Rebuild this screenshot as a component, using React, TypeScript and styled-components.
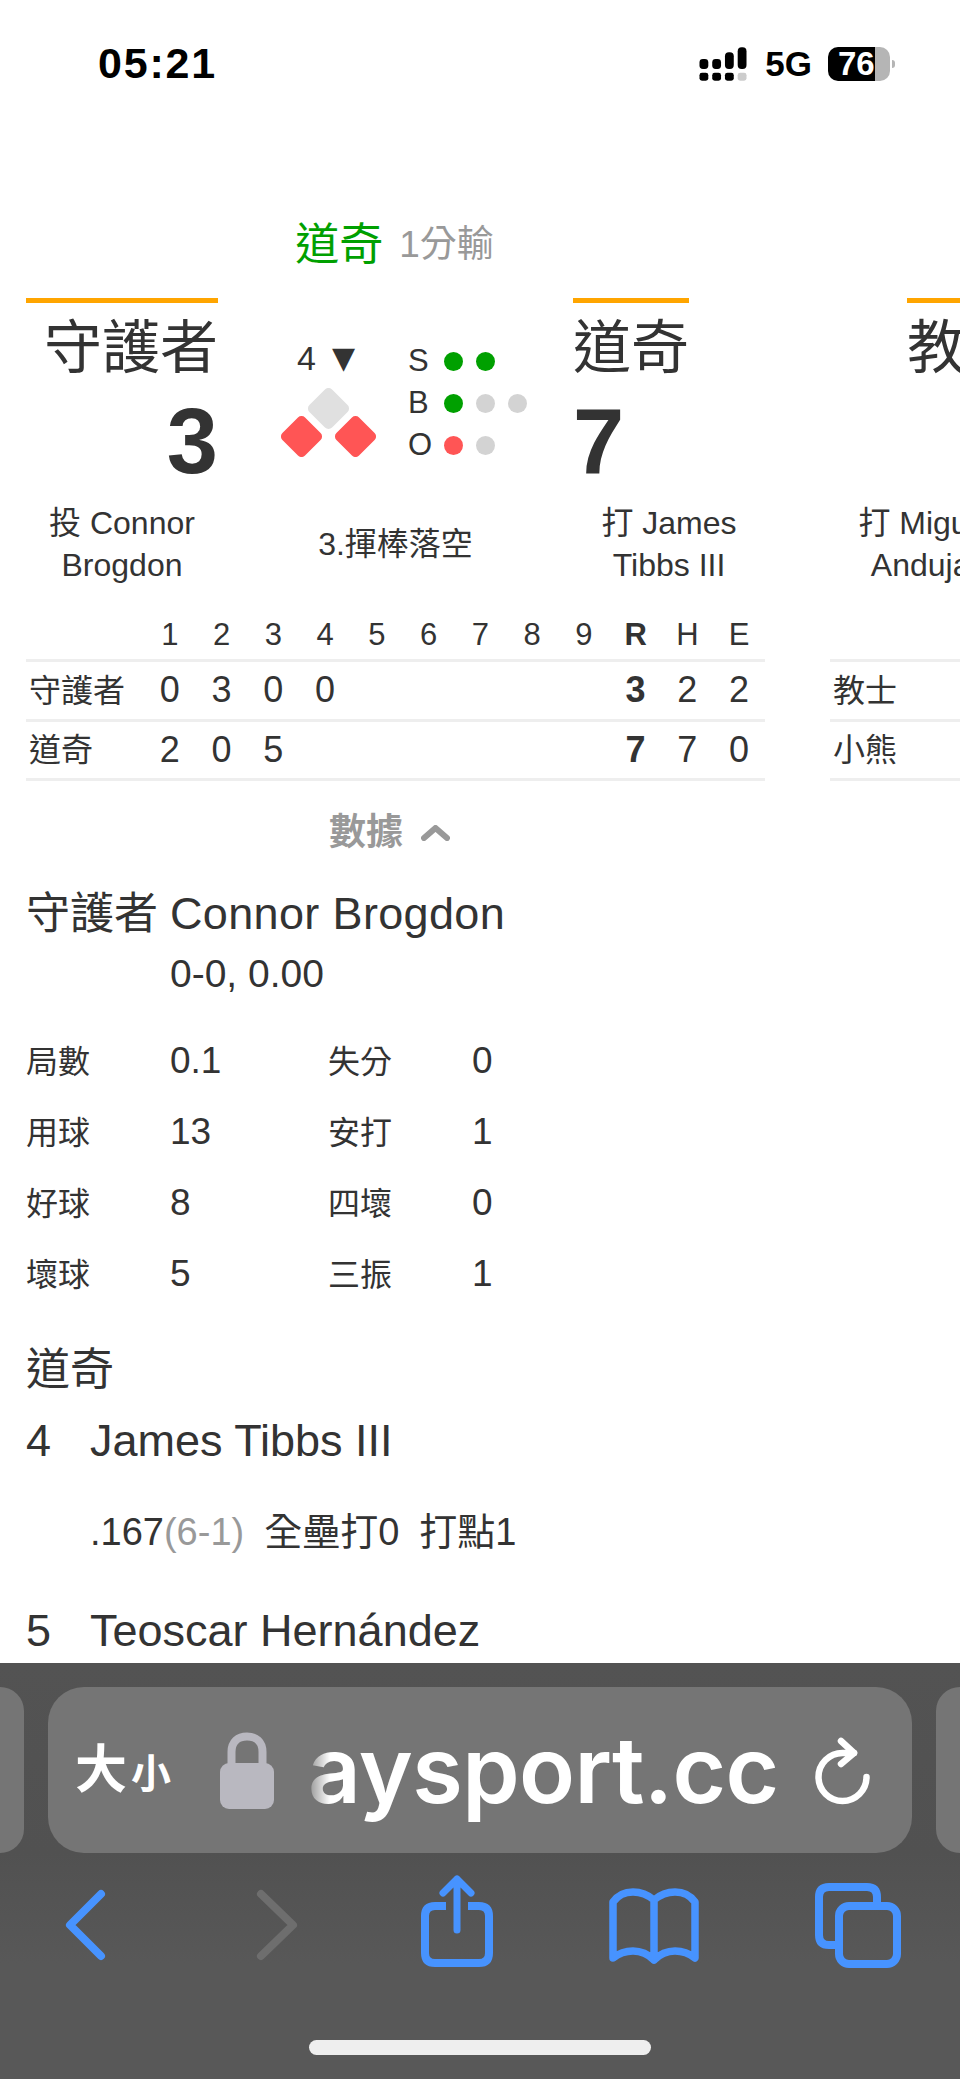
import React from 'react';
import styled, { createGlobalStyle } from 'styled-components';

const GlobalStyle = createGlobalStyle`
  html, body {
    margin: 0;
    padding: 0;
    background: #fff;
  }
  * {
    box-sizing: border-box;
  }
`;

const SANS = `"Liberation Sans", "Noto Sans CJK TC", sans-serif`;

const Page = styled.div`
  width: 960px;
  height: 2079px;
  display: flex;
  flex-direction: column;
  overflow: hidden;
  font-family: ${SANS};
  color: #333;
  background: #fff;
`;

const Content = styled.main`
  flex: 1;
  min-height: 0;
  overflow: hidden;
  padding: 0 26px;
`;

/* status bar */
const StatusBar = styled.header`
  height: 128px;
  flex: none;
  display: flex;
  align-items: center;
  justify-content: space-between;
  padding: 0 70px 0 98px;
  color: #000;
`;

const Clock = styled.div`
  padding-bottom: 2px;
  font-size: 43px;
  font-weight: 700;
  letter-spacing: 1.8px;
`;

const StatusRight = styled.div`
  display: flex;
  align-items: center;
`;

const Network = styled.div`
  margin-left: 18px;
  font-size: 35px;
  font-weight: 700;
`;

const Battery = styled.div`
  position: relative;
  width: 62px;
  height: 34px;
  margin-left: 16px;
  padding-left: 10px;
  border-radius: 10px;
  background: linear-gradient(90deg, #000 47px, #b5b5b5 47px);
  color: #fff;
  font-size: 33px;
  font-weight: 700;
  line-height: 34px;

  &::after {
    content: '';
    position: absolute;
    right: -5px;
    top: 13px;
    width: 3px;
    height: 8px;
    border-radius: 0 4px 4px 0;
    background: #b5b5b5;
  }
`;

/* game carousel */
const Carousel = styled.div`
  display: flex;
  gap: 65px;
  width: 1600px;
`;

const Game = styled.section`
  width: 739px;
  flex: none;
`;

const GameStatus = styled.div`
  height: 50px;
  margin: 92px 0 28px;
  padding-right: 2px;
  display: flex;
  justify-content: center;
  align-items: center;
  gap: 16px;
  line-height: 50px;
`;

const Leader = styled.span`
  color: #00a000;
  font-size: 44px;
`;

const Margin = styled.span`
  color: #999;
  font-size: 37px;
`;

const Board = styled.div`
  display: grid;
  grid-template-columns: 192px 355px 192px;
  grid-template-rows: 204px 84px;
`;

const TeamCol = styled.div<{ $right?: boolean }>`
  display: flex;
  flex-direction: column;
  align-items: ${(p) => (p.$right ? 'flex-end' : 'flex-start')};
`;

const TeamName = styled.div<{ $width?: number }>`
  width: ${(p) => (p.$width ? `${p.$width}px` : 'auto')};
  height: 93px;
  border-top: 5px solid #ffa500;
  font-size: 58px;
  line-height: 90px;
  text-align: right;
  white-space: nowrap;
`;

const Score = styled.div`
  height: 100px;
  font-size: 92px;
  font-weight: 700;
  line-height: 100px;
`;

const CenterCol = styled.div`
  display: flex;
  padding: 42px 0 0 63px;
`;

const BasesCol = styled.div`
  width: 95px;
`;

const Inning = styled.div`
  height: 36px;
  margin-bottom: 12px;
  padding-right: 5px;
  display: flex;
  justify-content: center;
  align-items: center;
  gap: 16px;
  font-size: 34px;
  line-height: 36px;
`;

const Arrow = styled.span`
  font-family: "DejaVu Sans", sans-serif;
  font-size: 30px;
`;

const Count = styled.div`
  margin-left: 32px;
`;

const CountRow = styled.div`
  height: 42px;
  display: flex;
  align-items: center;
  gap: 13px;
`;

const CountLabel = styled.span`
  width: 23px;
  font-size: 31px;
`;

const Dot = styled.span<{ $color: string }>`
  width: 19px;
  height: 19px;
  border-radius: 50%;
  background: ${(p) => p.$color};
`;

const Player = styled.div`
  font-size: 32px;
  line-height: 42px;
  text-align: center;
  white-space: nowrap;
`;

const Play = styled(Player)`
  align-self: center;
`;

/* line score */
const LineScore = styled.div`
  margin-top: 25px;
`;

const LineRow = styled.div<{ $head?: boolean }>`
  display: grid;
  grid-template-columns: 118px repeat(12, 1fr);
  align-items: center;
  height: ${(p) => (p.$head ? '51px' : '59.5px')};
  border-bottom: 3px solid #eee;
  font-size: ${(p) => (p.$head ? '31px' : '36px')};
`;

const LineTeam = styled.div`
  padding: 0 0 5px 3px;
  font-size: 32px;
  white-space: nowrap;
`;

const LineCell = styled.div<{ $bold?: boolean }>`
  text-align: center;
  font-weight: ${(p) => (p.$bold ? 700 : 400)};
`;

const Toggle = styled.div`
  height: 36px;
  margin-top: 34px;
  padding-right: 12px;
  display: flex;
  justify-content: center;
  align-items: center;
  gap: 18px;
  color: #999;
  font-size: 37px;
  font-weight: 700;
  line-height: 36px;
`;

/* stats */
const Section = styled.div`
  width: 908px;
`;

const PitcherHead = styled.div`
  margin-top: 35px;
  display: grid;
  grid-template-columns: 144px 1fr;
  font-size: 44px;
  line-height: 56px;
`;

const PitcherName = styled.span`
  font-size: 45px;
  letter-spacing: 0.35px;
`;

const PitcherRecord = styled.div`
  margin-top: 9px;
  padding-left: 144px;
  font-size: 39px;
  line-height: 46px;
`;

const StatGrid = styled.div`
  margin-top: 28px;
  display: grid;
  grid-template-columns: 144px 158px 144px 1fr;
  grid-auto-rows: 71px;
  align-items: center;
`;

const StatLabel = styled.span`
  padding-bottom: 4px;
  font-size: 32px;
`;

const StatValue = styled.span`
  font-size: 37px;
`;

const SectionTitle = styled.div`
  margin-top: 33px;
  font-size: 44px;
  line-height: 56px;
`;

const Batter = styled.div<{ $gap: number }>`
  margin-top: ${(p) => p.$gap}px;
  display: grid;
  grid-template-columns: 64px 1fr;
  font-size: 45px;
  line-height: 56px;
`;

const BatterStats = styled.div`
  margin-top: 41px;
  padding-left: 64px;
  display: flex;
  gap: 20px;
  font-size: 38px;
  line-height: 44px;
`;

const Muted = styled.span`
  color: #999;
`;

/* safari toolbar */
const Toolbar = styled.footer`
  height: 416px;
  flex: none;
  padding-top: 24px;
  background: linear-gradient(180deg, #535353 0, #515151 190px, #585858 300px);
`;

const TabStrip = styled.div`
  display: flex;
  gap: 24px;
  height: 166px;
`;

const TabEdge = styled.div<{ $side: 'left' | 'right' }>`
  width: 24px;
  background: #757575;
  border-radius: ${(p) => (p.$side === 'left' ? '0 36px 36px 0' : '36px 0 0 36px')};
`;

const AddressPill = styled.div`
  width: 864px;
  display: flex;
  align-items: center;
  padding: 0 37px 0 27px;
  border-radius: 36px;
  background: #757575;
  color: #fff;
`;

const TextSize = styled.div`
  width: 96px;
  display: flex;
  align-items: flex-end;
  gap: 4px;
  font-weight: 700;
`;

const BigChar = styled.span`
  font-size: 52px;
  line-height: 56px;
`;

const SmallChar = styled.span`
  font-size: 40px;
  line-height: 48px;
`;

const Url = styled.div`
  margin-left: 34px;
  font-family: Inter, "Liberation Sans", sans-serif;
  font-size: 92px;
  font-weight: 600;
  letter-spacing: -0.6px;
  line-height: 110px;
  white-space: nowrap;
  -webkit-mask-image: linear-gradient(90deg, rgba(0, 0, 0, 0.2) 0, #000 22px);
  mask-image: linear-gradient(90deg, rgba(0, 0, 0, 0.2) 0, #000 22px);
`;

const Reload = styled.svg`
  margin-left: auto;
  flex: none;
`;

const LockIcon = styled.svg`
  margin-left: 49px;
  flex: none;
`;

const NavRow = styled.nav`
  display: flex;
  padding-top: 17px;
`;

const NavIcon = styled.svg<{ $left: number; $muted?: boolean }>`
  flex: none;
  margin-left: ${(p) => p.$left}px;
  fill: none;
  stroke: ${(p) => (p.$muted ? '#6e6e6e' : '#4793ff')};
  stroke-width: 8;
  stroke-linecap: round;
  stroke-linejoin: round;
`;

const HomeIndicator = styled.div`
  width: 342px;
  height: 15px;
  margin: 70px auto 0;
  border-radius: 8px;
  background: #eee;
`;

const GREEN = '#00a000';
const GREY = '#d3d3d3';
const RED = '#ff5555';

const innings = ['1', '2', '3', '4', '5', '6', '7', '8', '9'];

type LineData = { team: string; runs: string[]; rhe: string[] };

const LineTable: React.FC<{ rows: LineData[] }> = ({ rows }) => (
  <LineScore>
    <LineRow $head>
      <div />
      {innings.map((n) => <LineCell key={n}>{n}</LineCell>)}
      <LineCell $bold>R</LineCell>
      <LineCell>H</LineCell>
      <LineCell>E</LineCell>
    </LineRow>
    {rows.map((row) => (
      <LineRow key={row.team}>
        <LineTeam>{row.team}</LineTeam>
        {innings.map((n, i) => <LineCell key={n}>{row.runs[i] ?? ''}</LineCell>)}
        {row.rhe.map((v, i) => <LineCell key={i} $bold={i === 0}>{v}</LineCell>)}
      </LineRow>
    ))}
  </LineScore>
);

const SignalIcon = () => (
  <svg width="48" height="34" viewBox="0 0 49 34">
    <rect x="0.5" y="12" width="9" height="10" rx="3.5" />
    <rect x="13.5" y="12" width="9" height="10" rx="3.5" />
    <rect x="26.5" y="5" width="9" height="17" rx="4" />
    <rect x="39.5" y="0" width="9" height="22" rx="4" />
    <rect x="0.5" y="26" width="9" height="8" rx="2.5" />
    <rect x="13.5" y="26" width="9" height="8" rx="2.5" />
    <rect x="26.5" y="26" width="9" height="8" rx="2.5" />
    <rect x="39.5" y="26" width="9" height="8" rx="2.5" fill="#ccc" />
  </svg>
);

const BasesIcon = () => (
  <svg width="95" height="69" viewBox="0 0 95 69">
    <rect x="-16" y="-16" width="32" height="32" rx="5" fill="#e0e0e0" transform="translate(47.5 20.5) rotate(45)" />
    <rect x="-16" y="-16" width="32" height="32" rx="5" fill={RED} transform="translate(20.5 48.5) rotate(45)" />
    <rect x="-16" y="-16" width="32" height="32" rx="5" fill={RED} transform="translate(74.5 48.5) rotate(45)" />
  </svg>
);

const ChevronUp = () => (
  <svg width="29" height="16" viewBox="0 0 29 16" fill="none" stroke="#999" strokeWidth="6" strokeLinecap="round" strokeLinejoin="round">
    <path d="M3 13 L14.5 3 L26 13" />
  </svg>
);

const App: React.FC = () => (
  <>
    <GlobalStyle />
    <Page>
      <StatusBar>
        <Clock>05:21</Clock>
        <StatusRight>
          <SignalIcon />
          <Network>5G</Network>
          <Battery>76</Battery>
        </StatusRight>
      </StatusBar>

      <Content>
        <Carousel>
          <Game>
            <GameStatus>
              <Leader>道奇</Leader>
              <Margin>1分輸</Margin>
            </GameStatus>
            <Board>
              <TeamCol $right>
                <TeamName $width={192}>守護者</TeamName>
                <Score>3</Score>
              </TeamCol>
              <CenterCol>
                <BasesCol>
                  <Inning>4<Arrow>▼</Arrow></Inning>
                  <BasesIcon />
                </BasesCol>
                <Count>
                  <CountRow><CountLabel>S</CountLabel><Dot $color={GREEN} /><Dot $color={GREEN} /></CountRow>
                  <CountRow><CountLabel>B</CountLabel><Dot $color={GREEN} /><Dot $color={GREY} /><Dot $color={GREY} /></CountRow>
                  <CountRow><CountLabel>O</CountLabel><Dot $color={RED} /><Dot $color={GREY} /></CountRow>
                </Count>
              </CenterCol>
              <TeamCol>
                <TeamName $width={116}>道奇</TeamName>
                <Score>7</Score>
              </TeamCol>
              <Player>投 Connor<br />Brogdon</Player>
              <Play>3.揮棒落空</Play>
              <Player>打 James<br />Tibbs III</Player>
            </Board>
            <LineTable
              rows={[
                { team: '守護者', runs: ['0', '3', '0', '0'], rhe: ['3', '2', '2'] },
                { team: '道奇', runs: ['2', '0', '5'], rhe: ['7', '7', '0'] },
              ]}
            />
            <Toggle>數據<ChevronUp /></Toggle>
          </Game>

          <Game>
            <GameStatus />
            <Board>
              <TeamCol $right>
                <TeamName $width={115}>教士</TeamName>
              </TeamCol>
              <div />
              <div />
              <Player>打 Miguel<br />Andujar</Player>
            </Board>
            <LineTable
              rows={[
                { team: '教士', runs: [], rhe: [] },
                { team: '小熊', runs: [], rhe: [] },
              ]}
            />
          </Game>
        </Carousel>

        <Section>
          <PitcherHead>
            <span>守護者</span>
            <PitcherName>Connor Brogdon</PitcherName>
          </PitcherHead>
          <PitcherRecord>0-0, 0.00</PitcherRecord>
          <StatGrid>
            <StatLabel>局數</StatLabel><StatValue>0.1</StatValue><StatLabel>失分</StatLabel><StatValue>0</StatValue>
            <StatLabel>用球</StatLabel><StatValue>13</StatValue><StatLabel>安打</StatLabel><StatValue>1</StatValue>
            <StatLabel>好球</StatLabel><StatValue>8</StatValue><StatLabel>四壞</StatLabel><StatValue>0</StatValue>
            <StatLabel>壞球</StatLabel><StatValue>5</StatValue><StatLabel>三振</StatLabel><StatValue>1</StatValue>
          </StatGrid>
          <SectionTitle>道奇</SectionTitle>
          <Batter $gap={15}><span>4</span><span>James Tibbs III</span></Batter>
          <BatterStats>
            <span>.167<Muted>(6-1)</Muted></span>
            <span>全壘打0</span>
            <span>打點1</span>
          </BatterStats>
          <Batter $gap={49}><span>5</span><span>Teoscar Hernández</span></Batter>
        </Section>
      </Content>

      <Toolbar>
        <TabStrip>
          <TabEdge $side="left" />
          <AddressPill>
            <TextSize><BigChar>大</BigChar><SmallChar>小</SmallChar></TextSize>
            <LockIcon width="54" height="77" viewBox="0 0 54 77">
              <path d="M11.5 34 V20 C11.5 10 18 4.5 27 4.5 C36 4.5 42.5 10 42.5 20 V34" fill="none" stroke="#b9b8c0" strokeWidth="8" />
              <rect x="0" y="31" width="54" height="46" rx="9" fill="#b9b8c0" />
            </LockIcon>
            <Url>aysport.cc</Url>
            <Reload width="65" height="75" viewBox="0 0 65 75" fill="none" stroke="#fff" strokeWidth="6.5" strokeLinecap="round" strokeLinejoin="round">
              <path d="M56.5 44 A24 24 0 1 1 32.5 20 H44" />
              <path d="M31 8 L44 20 L31 31" />
            </Reload>
          </AddressPill>
          <TabEdge $side="right" />
        </TabStrip>
        <NavRow>
          <NavIcon $left={60} width="50" height="100" viewBox="0 0 50 100">
            <path d="M41 24 L10 55 L41 86" />
          </NavIcon>
          <NavIcon $left={140} $muted width="55" height="100" viewBox="0 0 55 100">
            <path d="M11 24 L43 55 L11 86" />
          </NavIcon>
          <NavIcon $left={110} width="85" height="100" viewBox="0 0 85 100">
            <path strokeLinecap="butt" d="M31 36 H20 Q10 36 10 46 V83 Q10 93 20 93 H64 Q74 93 74 83 V46 Q74 36 64 36 H53" />
            <path strokeWidth="7" d="M42 60 V9 M28 23 L42 9 L56 23" />
          </NavIcon>
          <NavIcon $left={105} width="100" height="100" viewBox="0 0 100 100">
            <path strokeWidth="7.5" d="M49 30 C42 24 36 22 28 22 C20 22 13 25 8 32 V88 C13 84 20 81 28 81 C36 81 43 84 49 90 C55 84 62 81 70 81 C78 81 85 84 90 88 V32 C85 25 78 22 70 22 C62 22 56 24 49 30 V90" />
          </NavIcon>
          <NavIcon $left={105} width="95" height="100" viewBox="0 0 95 100">
            <path strokeLinecap="butt" d="M67 32 V27 Q67 17 57 17 H19 Q9 17 9 27 V65 Q9 75 19 75 H25" />
            <rect x="29" y="36" width="58" height="58" rx="10" />
          </NavIcon>
        </NavRow>
        <HomeIndicator />
      </Toolbar>
    </Page>
  </>
);

export default App;
